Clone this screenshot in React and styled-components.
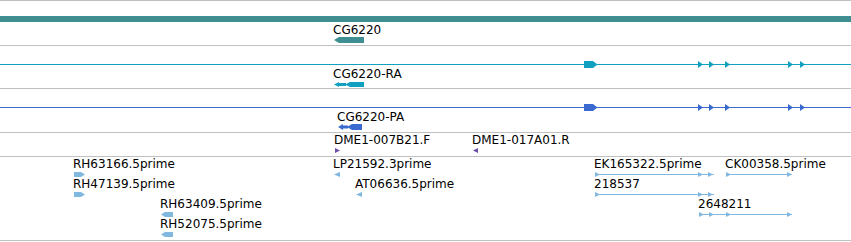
import React from 'react';
import styled, { createGlobalStyle } from 'styled-components';

const GRID = '#c0c0c0';
const TEAL = '#3f8e91';
const CYAN = '#11a0c0';
const BLUE = '#3a6ad0';
const EST = '#80b8e0';
const PURPLE = '#6c4fab';

const GlobalStyle = createGlobalStyle`
  html, body {
    margin: 0;
    padding: 0;
    background: #fff;
  }
  body {
    font-family: "DejaVu Sans", Verdana, sans-serif;
    font-size: 12px;
    color: #000;
  }
`;

const Panel = styled.div`
  width: 851px;
  border-top: 1px solid ${GRID};
  overflow: hidden;
`;

const Track = styled.div`
  position: relative;
  display: flow-root;
  height: ${p => p.$height}px;
  border-bottom: 1px solid ${GRID};
`;

const OverviewBar = styled.div`
  margin-top: 15px;
  height: 6px;
  background: ${TEAL};
`;

const TranscriptLine = styled.svg`
  display: block;
  margin-top: 15px;
`;

const Feature = styled.div.attrs(p => ({
  style: { left: p.$x, top: p.$y },
}))`
  position: absolute;
  display: flex;
  flex-direction: column;
  align-items: flex-start;
  gap: ${p => p.$gap || 0}px;
`;

const Label = styled.span`
  display: block;
  height: 14px;
  line-height: 14px;
  margin-left: -1px;
  white-space: nowrap;
`;

const Glyph = styled.svg`
  display: block;
`;

const exonArrows = [698, 709, 725, 788, 800];

const Transcript = ({ color }) => (
  <TranscriptLine width="851" height="7">
    <rect x="0" y="3" width="851" height="1" fill={color} />
    <rect x="584" y="0" width="9" height="7" fill={color} />
    <polygon points="593,0 597.5,3.5 593,7" fill={color} />
    {exonArrows.map(x => (
      <polygon key={x} points={`${x},0 ${x + 5},3.5 ${x},7`} fill={color} />
    ))}
  </TranscriptLine>
);

const GeneGlyph = () => (
  <Glyph width="30" height="6">
    <polygon points="0,3 5,0 30,0 30,6 5,6" fill={TEAL} />
  </Glyph>
);

const SplicedLeft = ({ color, width, height, gap }) => (
  <Glyph width={width} height={height}>
    <polygon points={`0,${height / 2} 5,0 5,${height}`} fill={color} />
    <rect x="5" y={height / 2 - 1.5} width={gap - 5} height="3" fill={color} />
    <polygon points={`${gap - 1},${height / 2} ${gap + 4},0 ${gap + 4},${height}`} fill={color} />
    <rect x={gap + 4} y="0" width={width - gap - 4} height={height} fill={color} />
  </Glyph>
);

const Arrow = ({ dir, color, width = 5, height = 5 }) => (
  <Glyph width={width} height={height}>
    {dir === 'right' ? (
      <polygon points={`0,0 ${width},${height / 2} 0,${height}`} fill={color} />
    ) : (
      <polygon points={`${width},0 0,${height / 2} ${width},${height}`} fill={color} />
    )}
  </Glyph>
);

const ReadGlyph = ({ dir, width }) => (
  <Glyph width={width} height="5">
    {dir === 'right' ? (
      <polygon points={`0,0 ${width - 4},0 ${width},2.5 ${width - 4},5 0,5`} fill={EST} />
    ) : (
      <polygon points={`${width},0 4,0 0,2.5 4,5 ${width},5`} fill={EST} />
    )}
  </Glyph>
);

const SplicedRead = ({ width, marks }) => (
  <Glyph width={width} height="5">
    <rect x="0" y="2" width={width} height="1" fill={EST} />
    {marks.map(x => (
      <polygon key={x} points={`${x},0 ${x + 5},2.5 ${x},5`} fill={EST} />
    ))}
  </Glyph>
);

const ests = [
  { name: 'RH63166.5prime', x: 74, row: 0, glyph: <ReadGlyph dir="right" width={11} /> },
  { name: 'RH47139.5prime', x: 74, row: 1, glyph: <ReadGlyph dir="right" width={11} /> },
  { name: 'RH63409.5prime', x: 161, row: 2, glyph: <ReadGlyph dir="left" width={12} /> },
  { name: 'RH52075.5prime', x: 161, row: 3, glyph: <ReadGlyph dir="left" width={12} /> },
  { name: 'LP21592.3prime', x: 334, row: 0, glyph: <Arrow dir="left" color={EST} width={6} /> },
  { name: 'AT06636.5prime', x: 356, row: 1, glyph: <Arrow dir="left" color={EST} width={6} /> },
  { name: 'EK165322.5prime', x: 595, row: 0, glyph: <SplicedRead width={119} marks={[0, 103, 113]} /> },
  { name: 'CK00358.5prime', x: 726, row: 0, glyph: <SplicedRead width={66} marks={[0, 61]} /> },
  { name: '218537', x: 595, row: 1, glyph: <SplicedRead width={119} marks={[0, 103, 113]} /> },
  { name: '2648211', x: 699, row: 2, glyph: <SplicedRead width={93} marks={[0, 10, 27, 88]} /> },
];

export default function App() {
  return (
    <>
      <GlobalStyle />
      <Panel>
        <Track $height={44}>
          <OverviewBar />
          <Feature $x={334} $y={22}>
            <Label>CG6220</Label>
            <GeneGlyph />
          </Feature>
        </Track>

        <Track $height={42}>
          <Transcript color={CYAN} />
          <Feature $x={334} $y={21} $gap={1}>
            <Label>CG6220-RA</Label>
            <SplicedLeft color={CYAN} width={30} height={5} gap={12} />
          </Feature>
        </Track>

        <Track $height={43}>
          <Transcript color={BLUE} />
          <Feature $x={338} $y={21}>
            <Label>CG6220-PA</Label>
            <SplicedLeft color={BLUE} width={24} height={6} gap={10} />
          </Feature>
        </Track>

        <Track $height={23}>
          <Feature $x={335} $y={0} $gap={1}>
            <Label>DME1-007B21.F</Label>
            <Arrow dir="right" color={PURPLE} />
          </Feature>
          <Feature $x={473} $y={0} $gap={1}>
            <Label>DME1-017A01.R</Label>
            <Arrow dir="left" color={PURPLE} />
          </Feature>
        </Track>

        <Track $height={83}>
          {ests.map(est => (
            <Feature key={est.name} $x={est.x} $y={est.row * 20} $gap={1}>
              <Label>{est.name}</Label>
              {est.glyph}
            </Feature>
          ))}
        </Track>
      </Panel>
    </>
  );
}
